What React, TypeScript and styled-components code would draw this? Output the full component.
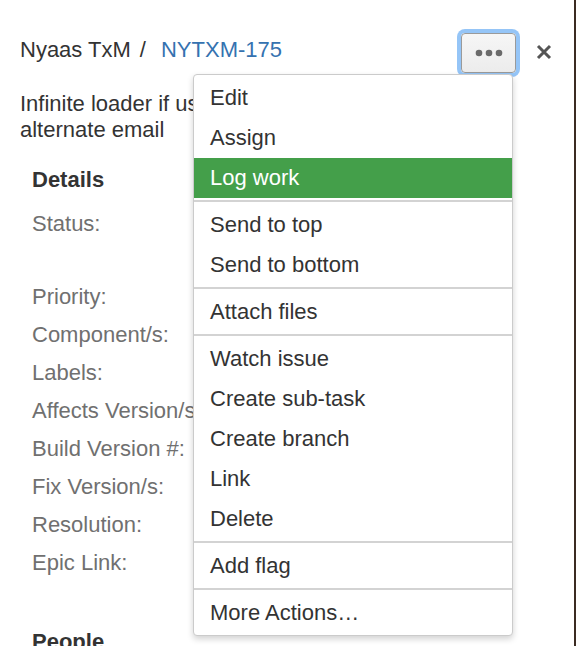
import React from "react";
import styled, { createGlobalStyle } from "styled-components";

const GlobalStyle = createGlobalStyle`
  html, body {
    margin: 0;
    padding: 0;
    background: #3b2b22;
  }
  body {
    font-family: "Liberation Sans", Arial, Helvetica, sans-serif;
    color: #333;
  }
`;

const Panel = styled.div`
  position: relative;
  width: 574px;
  height: 646px;
  box-sizing: border-box;
  padding: 33px 20px 0 20px;
  background: #fff;
  overflow: hidden;
  font-size: 22px;
`;

const Header = styled.div`
  display: flex;
  align-items: flex-start;
  justify-content: space-between;
  height: 40px;
`;

const Breadcrumbs = styled.div`
  display: flex;
  align-items: baseline;
  margin-top: 4px;
  line-height: 26px;
  color: #333;
`;

const Slash = styled.span`
  margin: 0 15px 0 9px;
`;

const IssueLink = styled.a`
  color: #3572b0;
  text-decoration: none;
`;

const Actions = styled.div`
  display: flex;
  align-items: center;
  gap: 20px;
  margin-right: 2px;
`;

const MoreButton = styled.button`
  display: flex;
  align-items: center;
  justify-content: center;
  width: 55px;
  height: 40px;
  padding: 0;
  border: 1px solid #9a9a9a;
  border-radius: 4px;
  background: linear-gradient(#f6f6f6, #ececec);
  box-shadow: 0 0 0 4px #95c5f7;
  cursor: pointer;
`;

const CloseButton = styled.button`
  display: flex;
  align-items: center;
  justify-content: center;
  width: 16px;
  height: 16px;
  padding: 0;
  border: none;
  background: none;
  margin-top: -2px;
  cursor: pointer;
`;

const Summary = styled.p`
  margin: 18px 0 0 0;
  line-height: 26px;
  color: #333;
`;

const Section = styled.section<{ $gap: number }>`
  margin: ${(p) => p.$gap}px 0 0 12px;
`;

const SectionTitle = styled.h4`
  margin: 0;
  font-size: 22px;
  font-weight: bold;
  line-height: 26px;
  color: #333;
`;

const FieldList = styled.div`
  display: flex;
  flex-direction: column;
  margin-top: 12px;
`;

const FieldRow = styled.div<{ $tall?: boolean }>`
  display: grid;
  grid-template-columns: 170px 1fr;
  height: ${(p) => (p.$tall ? 73 : 38)}px;
  line-height: 38px;
`;

const FieldLabel = styled.span`
  color: #707070;
  white-space: nowrap;
`;

const Dropdown = styled.div`
  position: absolute;
  left: 193px;
  top: 74px;
  width: 320px;
  box-sizing: border-box;
  background: #fff;
  border: 1px solid #cbcbcb;
  border-radius: 4px;
  box-shadow: 0 3px 6px rgba(0, 0, 0, 0.18);
  z-index: 10;
`;

const MenuGroup = styled.ul`
  list-style: none;
  margin: 0;
  padding: 3px 0 2px 0;
  & + & {
    border-top: 2px solid #d3d3d3;
  }
`;

const MenuItem = styled.li<{ $active?: boolean }>`
  height: 40px;
  line-height: 39px;
  padding: 0 16px;
  font-size: 22px;
  color: ${(p) => (p.$active ? "#fff" : "#333")};
  background: ${(p) => (p.$active ? "#449f4a" : "transparent")};
  white-space: nowrap;
`;

const menuGroups: { label: string; active?: boolean }[][] = [
  [{ label: "Edit" }, { label: "Assign" }, { label: "Log work", active: true }],
  [{ label: "Send to top" }, { label: "Send to bottom" }],
  [{ label: "Attach files" }],
  [
    { label: "Watch issue" },
    { label: "Create sub-task" },
    { label: "Create branch" },
    { label: "Link" },
    { label: "Delete" },
  ],
  [{ label: "Add flag" }],
  [{ label: "More Actions…" }],
];

const fields: { label: string; tall?: boolean }[] = [
  { label: "Status:", tall: true },
  { label: "Priority:" },
  { label: "Component/s:" },
  { label: "Labels:" },
  { label: "Affects Version/s:" },
  { label: "Build Version #:" },
  { label: "Fix Version/s:" },
  { label: "Resolution:" },
  { label: "Epic Link:" },
];

const Dots = () => (
  <svg width="28" height="8" viewBox="0 0 28 8">
    <circle cx="4" cy="4" r="3.3" fill="#6a6a6a" />
    <circle cx="14" cy="4" r="3.3" fill="#6a6a6a" />
    <circle cx="24" cy="4" r="3.3" fill="#6a6a6a" />
  </svg>
);

const CloseIcon = () => (
  <svg width="16" height="16" viewBox="0 0 16 16">
    <path d="M2 2 L14 14 M14 2 L2 14" stroke="#555" strokeWidth="3" />
  </svg>
);

export default function App() {
  return (
    <>
      <GlobalStyle />
      <Panel>
        <Header>
          <Breadcrumbs>
            <span>Nyaas TxM</span>
            <Slash>/</Slash>
            <IssueLink href="#">NYTXM-175</IssueLink>
          </Breadcrumbs>
          <Actions>
            <MoreButton aria-label="More">
              <Dots />
            </MoreButton>
            <CloseButton aria-label="Close">
              <CloseIcon />
            </CloseButton>
          </Actions>
        </Header>

        <Summary>
          Infinite loader if user logs in with an
          <br />
          alternate email
        </Summary>

        <Section $gap={24}>
          <SectionTitle>Details</SectionTitle>
          <FieldList>
            {fields.map((f) => (
              <FieldRow key={f.label} $tall={f.tall}>
                <FieldLabel>{f.label}</FieldLabel>
              </FieldRow>
            ))}
          </FieldList>
        </Section>

        <Section $gap={47}>
          <SectionTitle>People</SectionTitle>
        </Section>

        <Dropdown>
          {menuGroups.map((group, i) => (
            <MenuGroup key={i}>
              {group.map((item) => (
                <MenuItem key={item.label} $active={item.active}>
                  {item.label}
                </MenuItem>
              ))}
            </MenuGroup>
          ))}
        </Dropdown>
      </Panel>
    </>
  );
}
